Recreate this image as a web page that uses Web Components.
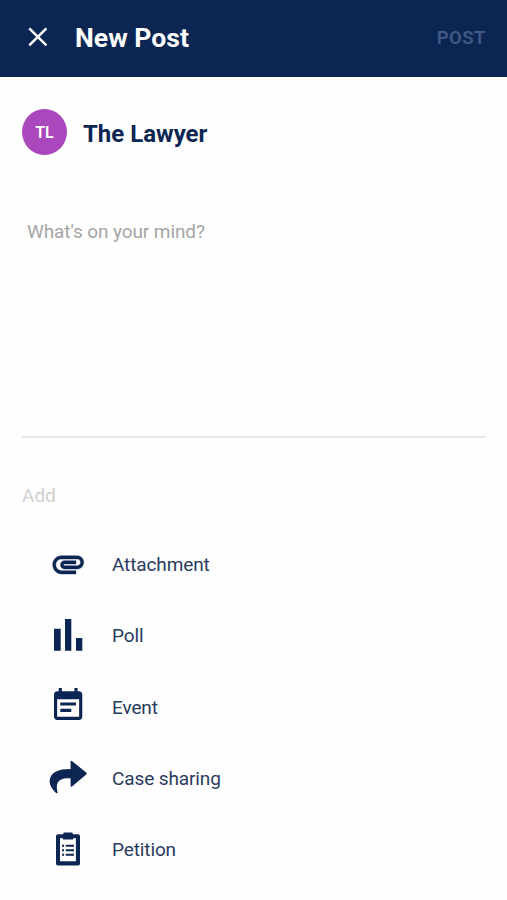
<!DOCTYPE html>
<html lang="en">
<head>
<meta charset="utf-8">
<title>New Post</title>
<style>
html, body { margin: 0; height: 100%; background: #fefefe; }
body { font-family: Roboto, "Liberation Sans", sans-serif; color: #0c2653; overflow: hidden; }
</style>
</head>
<body>
<new-post-page></new-post-page>
<script>
const ICONS = {
  attachment: '<path stroke="#0c2653" stroke-width=".25" transform="translate(3.6 1.1) scale(1.55 1.66)" d="M2 12.5C2 9.46 4.46 7 7.5 7H18c2.21 0 4 1.79 4 4s-1.79 4-4 4H9.5C8.12 15 7 13.88 7 12.5S8.12 10 9.5 10H17v2H9.41c-.55 0-.55 1 0 1H18c1.1 0 2-.9 2-2s-.9-2-2-2H7.5C5.57 9 4 10.57 4 12.5S5.57 16 7.5 16H17v2H7.5C4.46 18 2 15.54 2 12.5z"/>',
  poll: '<path d="M8 14.7h6.7v22H8zM19 5h6.3v31.7H19zM30 24h6.3v12.7H30z"/>',
  event: '<path transform="translate(3.3 1.4) scale(1.57 1.6)" d="M14 14H7v2h7v-2zm3-4H7v2h10v-2zm2-7h-1V1h-2v2H8V1H6v2H5c-1.11 0-2 .9-2 2v14c0 1.1.89 2 2 2h14c1.1 0 2-.9 2-2V5c0-1.1-.9-2-2-2zm0 16H5V8h14v11z"/>',
  share: '<path d="M24.600 13V6q0-2 1.600-.8L40.200 16.600q1 1 0 2L26.300 30.200q-1.700 1.300-1.700-.6V22.500C15 21.500 8.500 25 11.600 36.300q-.1 1.700-1.600.7C5.500 32.500 3.500 29 3.600 25C4.500 16 12 13 24.600 13z"/>',
  petition: '<path fill-rule="evenodd" d="M12 6.2h5.2V6q0-1.400 1.400-1.400h6.800q1.400 0 1.400 1.400v.2H32q2 0 2 2v27.300q0 2-2 2H12q-2 0-2-2V8.200q0-2 2-2zM14 10.300v22.900h15.900V10.300H27v1.200H17v-1.200z"/><path d="M16 16.700h2v2h-2zm3.700 0H28v2h-8.300zM16 21.200h2v2h-2zm3.700 0H28v2h-8.300zM16 25.700h2v2h-2zm3.700 0H28v2h-8.300z"/>'
};
function define(name, render) {
  customElements.define(name, class extends HTMLElement {
    constructor() { super(); this.attachShadow({ mode: 'open' }); }
    connectedCallback() { this.shadowRoot.innerHTML = render(this); }
  });
}
define('post-header', () => `
<style>
:host { display: flex; align-items: center; height: 77px; box-sizing: border-box; padding: 0 21px 0 28px; background: #0c2653; color: #fff; }
svg { display: block; width: 20px; height: 20px; margin: 0 27px 3px 0; }
h1 { margin: 0 0 2px; flex: 1; font-size: 26.600px; line-height: 32px; font-weight: 700; }
button { all: unset; font-size: 18.500px; line-height: 24px; font-weight: 600; letter-spacing: .5px; color: #435985; margin-bottom: 2px; }
</style>
<svg viewBox="0 0 20 20" aria-label="Close"><path d="M1.300 1.300L18.400 18.400M18.400 1.300L1.300 18.400" stroke="#fff" stroke-width="2.500"/></svg>
<h1><slot></slot></h1><button><slot name="action"></slot></button>`);
define('post-author', () => `
<style>
:host { display: flex; align-items: center; height: 46px; gap: 16px; padding: 32px 22px 0; }
i { display: grid; place-items: center; width: 45px; height: 46px; border-radius: 50%; background: #ab47bc; color: #fff; font: 600 16px/20px Roboto, sans-serif; }
i span { margin-top: 1px; }
b { font-size: 24px; line-height: 30px; font-weight: 700; margin-top: 3px; }
</style><i><span><slot name="initials"></slot></span></i><b><slot></slot></b>`);
define('post-editor', () => `
<style>
:host { display: block; height: 218px; margin: 63px 21px 0 22px; padding-left: 5px; border-bottom: 2px solid #e7e7e7; color: #a5a5a5; font-size: 19px; line-height: 28px; letter-spacing: -.1px; }
</style><slot></slot>`);
define('section-label', () => `
<style>:host { display: block; margin: 44px 22px 0; height: 28px; font-size: 19px; line-height: 28px; color: #d0d0d0; }</style><slot></slot>`);
define('post-option', el => `
<style>
:host { display: flex; align-items: center; height: 71.200px; padding-left: 46px; gap: 22px; font-size: 19px; line-height: 28px; letter-spacing: -.12px; color: #2a3b60; }
svg { display: block; width: 44px; height: 44px; fill: #0c2653; }
span { margin-top: 1px; }
</style><svg viewBox="0 0 44 44">${ICONS[el.getAttribute('icon')]}</svg><span><slot></slot></span>`);
define('new-post-page', () => `
<style>:host { display: block; } nav { padding-top: 19.200px; }</style>
<post-header>New Post<span slot="action">POST</span></post-header>
<post-author><span slot="initials">TL</span>The Lawyer</post-author>
<post-editor>What's on your mind?</post-editor>
<section-label>Add</section-label>
<nav>
<post-option icon="attachment">Attachment</post-option>
<post-option icon="poll">Poll</post-option>
<post-option icon="event">Event</post-option>
<post-option icon="share">Case sharing</post-option>
<post-option icon="petition">Petition</post-option>
</nav>`);
</script>
</body>
</html>
